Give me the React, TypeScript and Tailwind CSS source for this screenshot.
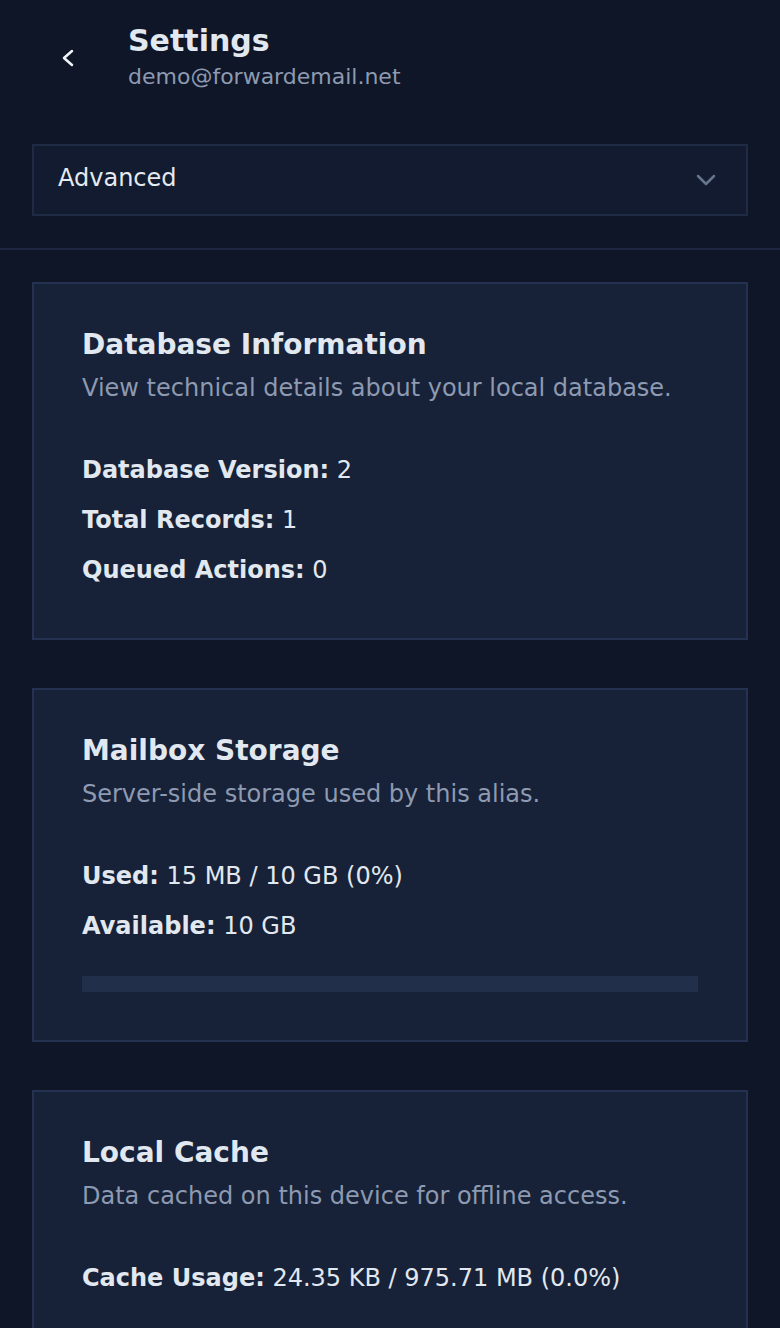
import React from "react";

function Row({ label, value }: { label: string; value: string }) {
  return (
    <div className="text-[24px] leading-[32px] text-[#e2e8f0]">
      <span className="font-bold">{label}</span> {value}
    </div>
  );
}

function Card({
  title,
  desc,
  rows,
  bar,
}: {
  title: string;
  desc: string;
  rows: [string, string][];
  bar?: boolean;
}) {
  return (
    <section
      className={`border-2 border-[#243150] bg-[#172137] px-12 pt-[43px] ${
        bar ? "pb-12" : "pb-[52px]"
      }`}
    >
      <h2 className="text-[28px] font-bold leading-[36px] text-[#e2e8f0]">{title}</h2>
      <p className="mt-[9px] text-[24px] leading-[32px] text-[#8d9ab1]">{desc}</p>
      <div className="mt-[50px] flex flex-col gap-[18px]">
        {rows.map(([l, v]) => (
          <Row key={l} label={l} value={v} />
        ))}
      </div>
      {bar && <div className="mt-[34px] h-4 w-full bg-[#222f4b]" />}
    </section>
  );
}

export default function App() {
  return (
    <div
      className="min-h-[1328px] bg-[#0f1628] text-[#e2e8f0]"
      style={{ fontFamily: "'DejaVu Sans', sans-serif" }}
    >
      <header className="flex items-center pl-[56px] pt-[23px]">
        <button className="flex h-6 w-6 items-center justify-center text-[#f1f5f9]">
          <svg width="16" height="20" viewBox="0 0 16 20" fill="none">
            <polyline
              points="12,3 4,10 12,17"
              stroke="currentColor"
              strokeWidth="2.5"
              strokeLinecap="round"
              strokeLinejoin="round"
            />
          </svg>
        </button>
        <div className="ml-12">
          <h1 className="text-[30px] font-bold leading-[36px] text-[#e2e8f0]">Settings</h1>
          <div className="mt-[3px] text-[22px] leading-[30px] text-[#8d9ab1]">
            demo@forwardemail.net
          </div>
        </div>
      </header>

      <div className="mx-8 mt-[52px] flex h-[72px] items-center justify-between border-2 border-[#1f2a44] bg-[#121b2f] pl-6 pr-[29px]">
        <span className="mb-1 text-[24px] leading-[32px] text-[#e5e9f0]">Advanced</span>
        <svg width="22" height="14" viewBox="0 0 22 14" fill="none" className="text-[#66758c]">
          <polyline
            points="3,3 11,11 19,3"
            stroke="currentColor"
            strokeWidth="2.5"
            strokeLinecap="round"
            strokeLinejoin="round"
          />
        </svg>
      </div>

      <div className="mt-8 h-[2px] w-full bg-[#1d2740]" />

      <main className="flex flex-col gap-12 px-8 pt-8 pb-12">
        <Card
          title="Database Information"
          desc="View technical details about your local database."
          rows={[
            ["Database Version:", "2"],
            ["Total Records:", "1"],
            ["Queued Actions:", "0"],
          ]}
        />
        <Card
          title="Mailbox Storage"
          desc="Server-side storage used by this alias."
          rows={[
            ["Used:", "15 MB / 10 GB (0%)"],
            ["Available:", "10 GB"],
          ]}
          bar
        />
        <Card
          title="Local Cache"
          desc="Data cached on this device for offline access."
          rows={[["Cache Usage:", "24.35 KB / 975.71 MB (0.0%)"]]}
          bar
        />
      </main>
    </div>
  );
}
